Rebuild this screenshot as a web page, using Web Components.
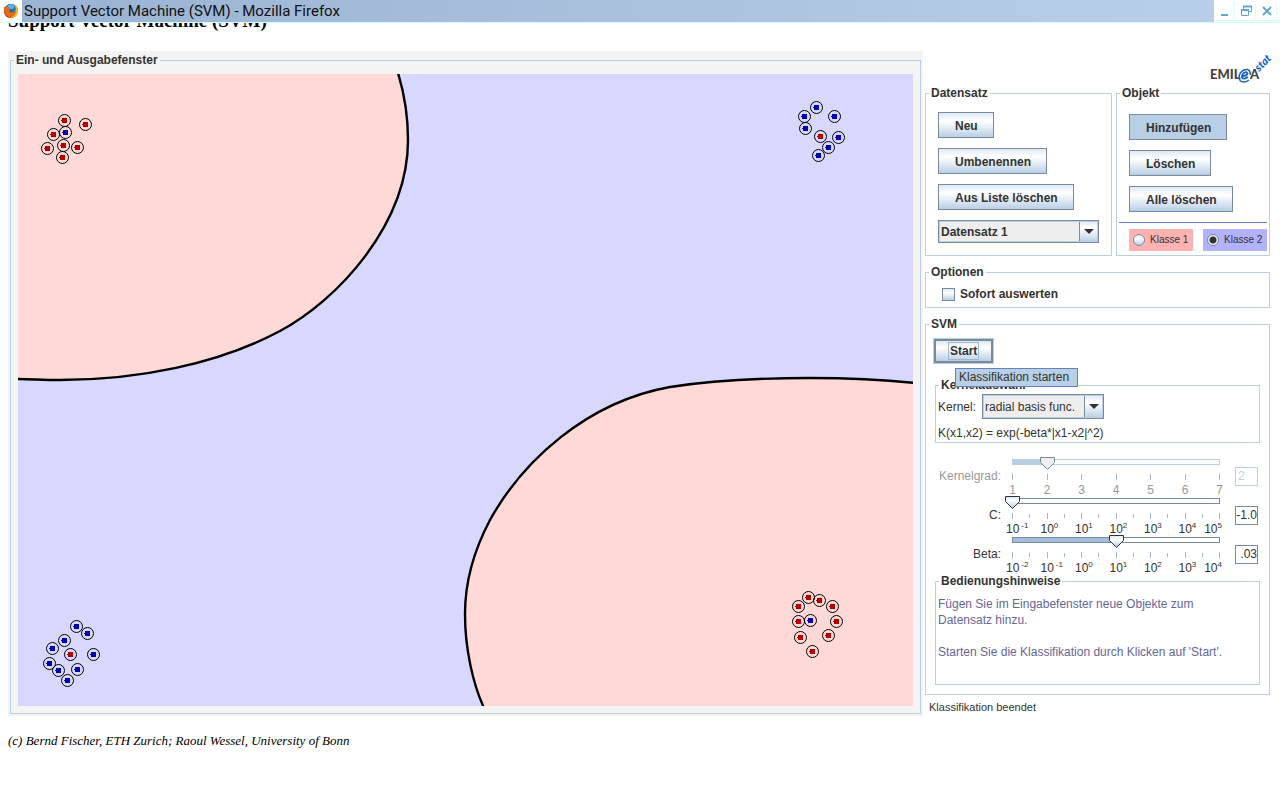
<!DOCTYPE html>
<html lang="de">
<head>
<meta charset="utf-8">
<title>Support Vector Machine (SVM)</title>
<style>
  body { margin: 0; background: #fff; color: #333; font: 12px/14px "Liberation Sans", Arial, sans-serif; }
</style>
</head>
<body>
<svm-app></svm-app>
<script>
function define(name, html, setup) {
  const template = document.createElement('template');
  template.innerHTML = html;
  customElements.define(name, class extends HTMLElement {
    connectedCallback() {
      if (this.shadowRoot) return;
      const root = this.attachShadow({ mode: 'open' });
      root.append(template.content.cloneNode(true));
      if (setup) setup(this, root);
    }
  });
}

define('window-bar', `
<style>
  :host { display: flex; height: 22px; background: #fff; border-bottom: 1px solid #d4fbfd; color: #111; }
  .icon { width: 22px; display: flex; align-items: center; justify-content: center; }
  .title { flex: 1; padding-left: 2px; font: 15px/23px Roboto, "Open Sans", sans-serif; background: linear-gradient(90deg, #9ab3d2, #b9cfe9); white-space: nowrap; overflow: hidden; }
  .buttons { display: flex; gap: 1px; padding: 1px 3px 1px 1px; }
  button { width: 20px; height: 20px; padding: 0; border: 0 solid #dffcfd; border-width: 0 1px 1px 0; background: #fff; display: flex; align-items: center; justify-content: center; }
</style>
<span class="icon"><svg width="16" height="16" viewBox="0 0 16 16" aria-hidden="true">
  <circle cx="8" cy="7.6" r="6.8" fill="#1d6fb5"/><path d="M4 3 Q8 0 12 2.5 L10 6 L6 6Z" fill="#5cb4e4"/>
  <path d="M1.2 3.5 Q2 4.5 3.2 4.2 Q5 3 6 4.2 L7.8 5.6 Q6 6.6 6 8 Q7.5 10.8 10.2 9 Q13.2 8 12.6 4.5 L11.8 2 Q15.6 5 14.9 9 Q13.5 14.8 8 15 Q1.6 14.6 1 8.5 Q.7 5.6 1.2 3.5Z" fill="#e66a12"/>
  <path d="M11.8 2 Q15.6 5 14.9 9 Q13.5 14.8 8 15 Q13.5 12 12.8 6Z" fill="#f8b822"/><path d="M1 7 Q2 13 8 15 Q1.6 14.6 1 8.5Z" fill="#b93418"/>
</svg></span>
<span class="title"><slot></slot></span>
<span class="buttons">
  <button aria-label="Minimieren"><svg width="12" height="12"><path d="M2 10h7" stroke="#62a9cf" stroke-width="2" fill="none"/></svg></button>
  <button aria-label="Wiederherstellen"><svg width="12" height="12" fill="none" stroke="#62a9cf"><path d="M3.5 4V1.5h8v5H9M1.500 4.500h7v6h-7z"/><path d="M3 1.500h9M1 5h8" stroke-width="2"/></svg></button>
  <button aria-label="Schließen"><svg width="12" height="12"><path d="M2 2l8 8M10 2l-8 8" stroke="#62a9cf" stroke-width="2" fill="none"/></svg></button>
</span>`);

define('titled-panel', `
<style>
  :host { display: block; }
  fieldset { margin: 0; min-width: 0; border: 1px solid #b8cfe5; padding: var(--pad, 0); height: 100%; box-sizing: border-box; }
  legend { padding: 0 2px; font-weight: bold; line-height: 14px; height: 14px; white-space: nowrap; }
</style>
<fieldset><legend></legend><slot></slot></fieldset>`, (host, root) => {
  const l = root.querySelector('legend');
  l.textContent = host.getAttribute('caption');
  l.style.marginLeft = 'calc(3px - ' + (host.getAttribute('inset') || '0px') + ')';
});

define('push-button', `
<style>
  :host { display: block; }
  button { font: bold 12px/14px "Liberation Sans", Arial, sans-serif; color: #333; height: 26px; padding: 1px 15px 0 16px; border: 1px solid #7a8a99; background: linear-gradient(#dde8f3, #fff 30%, #fff 35%, #b8cfe5); white-space: nowrap; display: block; }
  :host([pressed]) button { background: #b8cfe5; }
  :host([focused]) button { border-width: 2px; padding: 0 12px; outline: 1px solid #b8cfe5; outline-offset: 0; height: 24px; }
  :host([focused]) span { display: inline-block; padding: 1px; border: 1px solid #a3b8cc; }
</style>
<button type="button"><span><slot></slot></span></button>`);

define('combo-box', `
<style>
  :host { display: block; }
  div { display: flex; align-items: center; gap: 6px; }
  select { appearance: none; margin: 0; box-sizing: border-box; width: var(--w); height: var(--h); padding: 0 20px 0 2px; border: 1px solid #7a8a99; border-radius: 0; box-shadow: inset 0 0 0 1px #b8cfe5; color: #333; font: inherit; font-weight: var(--weight, normal);
    background: url("data:image/svg+xml,%3Csvg xmlns='http://www.w3.org/2000/svg' width='10' height='5'%3E%3Cpath d='M0 0h10L5 5z' fill='%23333'/%3E%3C/svg%3E") no-repeat right 4px center, linear-gradient(#7a8a99, #7a8a99) no-repeat right 18px top / 1px 100%, linear-gradient(#dde8f3, #fff 30%, #fff 35%, #b8cfe5) no-repeat right top / 18px 100%, #eee; }
</style>
<div><label for="s"></label><select id="s"></select></div>`, (host, root) => {
  const label = root.querySelector('label'), select = root.querySelector('select');
  if (host.hasAttribute('label')) label.textContent = host.getAttribute('label');
  else { label.remove(); select.setAttribute('aria-label', host.getAttribute('name')); }
  select.add(new Option(host.getAttribute('value')));
});

define('check-option', `
<style>
  :host { display: flex; align-items: center; gap: 5px; font-weight: bold; }
  input { appearance: none; margin: 0; width: 13px; height: 13px; border: 1px solid #7a8a99; background: linear-gradient(#dde8f3, #fff 35%, #b8cfe5); }
</style>
<input type="checkbox" id="c"><label for="c"><slot></slot></label>`);

define('class-picker', `
<style>
  :host { display: flex; gap: 10px; font-size: 10px; }
  label { display: flex; align-items: center; box-sizing: border-box; height: 22px; flex: 1; padding-left: 4px; gap: 5px; white-space: nowrap; }
  .one { background: #ffb2b2; } .two { background: #b2b2ff; }
  input { appearance: none; flex: none; margin: 0; width: 12px; height: 12px; border: 1px solid #7a8a99; border-radius: 50%; background: linear-gradient(#dde8f3, #fff 35%, #b8cfe5); }
  input:checked { background: radial-gradient(circle, #333 3px, #e8f0f8 4px); }
</style>
<label class="one"><input type="radio" name="k">Klasse 1</label>
<label class="two"><input type="radio" name="k" checked>Klasse 2</label>`);

define('slider-row', `
<style>
  :host { display: grid; grid-template-columns: 66px 220px 27px; column-gap: 5px; height: 39px; align-items: center; }
  :host([disabled]) { color: #999; --line: #b8cfe5; --edge: #b8cfe5; --fill: #b8cfe5; }
  .name { text-align: right; white-space: nowrap; margin-bottom: 2px; }
  .scale { align-self: start; }
  .groove { display: grid; height: 13px; }
  .groove > * { grid-area: 1 / 1; }
  .track { box-sizing: border-box; height: 6px; margin: 2px 6px 0; border: 1px solid var(--line, #7a8a99);
    background: linear-gradient(90deg, var(--fill, #a3bde0) var(--at), #fff var(--at)); }
  input[type=range] { appearance: none; height: 13px; margin: 0 -1px; background: none; min-width: 0; }
  input::-webkit-slider-runnable-track { height: 13px; }
  input::-webkit-slider-thumb { appearance: none; width: 15px; height: 13px; border: 0;
    background: url("data:image/svg+xml,%3Csvg xmlns='http://www.w3.org/2000/svg' width='15' height='13'%3E%3ClinearGradient id='g' x2='0' y2='1'%3E%3Cstop stop-color='%23dde8f3'/%3E%3Cstop offset='.35' stop-color='white'/%3E%3Cstop offset='1' stop-color='%23a8c4e0'/%3E%3C/linearGradient%3E%3Cpath d='M.5 .5h14v5L7.5 12.500.5 5.500z' fill='url(%23g)' stroke='%23333'/%3E%3C/svg%3E") no-repeat; }
  input:disabled::-webkit-slider-thumb { background-image: url("data:image/svg+xml,%3Csvg xmlns='http://www.w3.org/2000/svg' width='15' height='13'%3E%3Cpath d='M.5 .5h14v5L7.5 12.500.5 5.500z' fill='%23eee' stroke='%237a8a99'/%3E%3C/svg%3E"); }
  .ticks { display: flex; justify-content: space-between; height: 6px; margin: 4px 6px 3px; }
  .ticks i { width: 1px; height: 6px; background: #a3b8cc; }
  .ticks i.minor { height: 4px; margin-top: 1px; }
  .nums { display: flex; justify-content: space-between; }
  .nums span { width: 13px; text-align: center; white-space: nowrap; line-height: 14px; height: 14px; }
  .nums.pow span { text-align: left; display: flex; }
  .nums.pow span:last-child { justify-content: flex-end; box-sizing: border-box; padding-right: 4px; }
  sup { font-size: 8px; line-height: 8px; }
  sup.neg { padding-left: 2px; }
  input[type=text] { box-sizing: border-box; justify-self: end; width: 23px; height: 19px; margin-bottom: 2px; padding: 0; border: 1px solid var(--edge, #7a8a99); background: #fff; color: inherit; font: inherit; text-align: right; }
  :host([disabled]) input[type=text] { text-align: left; padding-left: 2px; color: #b8cfe5; }
</style>
<label class="name" for="r"></label>
<div class="scale"><div class="groove"><div class="track"></div><input type="range" id="r"></div><div class="ticks"></div><div class="nums"></div></div>
<input type="text">`, (host, root) => {
  const get = n => host.getAttribute(n);
  const powers = host.hasAttribute('powers'), from = +get('from');
  root.querySelector('.name').textContent = get('label');
  const r = root.querySelector('#r');
  r.min = from; r.max = from + 6; r.value = get('at');
  root.querySelector('.track').style.setProperty('--at', (get('at') - from) / 6 * 100 + '%');
  const t = root.querySelector('input[type=text]');
  t.value = get('value'); t.setAttribute('aria-label', get('label') + ' Wert');
  if (host.hasAttribute('disabled')) { r.disabled = true; t.disabled = true; }
  const ticks = root.querySelector('.ticks'), nums = root.querySelector('.nums');
  if (powers) nums.classList.add('pow');
  for (let k = 0; k < 7; k++) {
    ticks.insertAdjacentHTML('beforeend', (k && powers ? '<i class="minor"></i>' : '') + '<i></i>');
    const n = from + k;
    nums.insertAdjacentHTML('beforeend', powers ? `<span>10<sup class="${n < 0 ? 'neg' : ''}">${n}</sup></span>` : `<span>${n}</span>`);
  }
});

define('svm-plot', `
<style>
  :host { display: block; }
  svg { display: block; width: 100%; height: auto; background: #d8d8ff; }
</style>
<svg viewBox="0 0 895 632" role="img" aria-label="Klassifikationsergebnis">
  <g fill="#ffd8d8" stroke="#000" stroke-width="2.4">
    <path d="M380 -1C388 25 390 45 390 66C390 150 320 226 262 257C200 290 120 306 42 306C25 306 12 305 -2 305V-3H380Z"/>
    <path d="M897 309C860 305 830 304 792 304C730 304 690 307 652 313C568 328 504 388 472 446C455 478 447 510 447 540C447 575 455 610 466 634H898Z"/>
  </g>
</svg>`, (host, root) => {
  const red = '#b20000', blue = '#0000b2';
  const points = [
    [red, [[64,120],[85,124],[53,134],[47,148],[63,145],[77,147],[62,157],[820,136],[70,654],
           [808,597],[819,600],[798,606],[832,606],[798,621],[836,621],[800,637],[828,635],[812,651]]],
    [blue, [[65,132],[816,107],[804,116],[834,116],[805,128],[838,137],[828,147],[818,155],
            [76,626],[87,633],[64,640],[52,648],[93,654],[49,663],[58,670],[77,669],[67,680],[810,620]]]];
  let marks = '';
  for (const [color, list] of points) for (const [px, py] of list) {
    const x = px - 18, y = py - 74;
    marks += `<circle cx="${x + .5}" cy="${y + .5}" r="6" fill="none" stroke="#000"/><path d="M${x - 2} ${y - 2}h5v5h-5zM${x - 3} ${y}h1v1h-1z" fill="${color}"/>`;
  }
  root.querySelector('svg').insertAdjacentHTML('beforeend', marks);
});

define('emilea-logo', `
<style>:host { display: block; } svg { display: block; }</style>
<svg width="66" height="35" viewBox="0 0 66 35" role="img" aria-label="EMILeA-stat" font-family="Lato, sans-serif" font-weight="900">
  <text x="2" y="28" font-size="13" fill="#444">EMIL</text>
  <text x="42" y="28" font-size="13" fill="#444">A</text>
  <path d="M34 25Q39 25 39.500 22.500Q39 20.500 36.500 21.500Q33.500 23.500 34 26.500Q35.500 29 40 26" fill="none" stroke="#1463c4" stroke-width="1.8"/>
  <path d="M41 29Q36 32.500 32.500 30Q30 27 32 22.500Q35 18 39.500 18.500Q43 20 42 24" fill="none" stroke="#1463c4" stroke-width="1.5"/>
  <text transform="translate(51 21) rotate(-45)" font-size="11" font-weight="900" font-style="italic" fill="#1463c4">stat</text>
</svg>`);

define('tool-tip', `
<style>:host { display: block; padding: 1px 8px 1px 3px; border: 1px solid #6382bf; background: #b8cfe5; white-space: nowrap; line-height: 15px; }</style>
<slot></slot>`);

define('svm-app', `
<style>
  :host { display: block; }
  window-bar { position: fixed; top: 0; left: 0; right: 0; z-index: 5; }
  main { padding: 10px 8px 0; }
  h1 { margin: 0 0 19px; font: bold 19px/22px "Liberation Serif", "Times New Roman", serif; color: #000; }
  .applet { display: flex; gap: 2px; align-items: flex-start; padding-right: 2px; }
  .io { flex: 1; min-width: 0; background: #f4f4f4; padding: 2px; }
  .io titled-panel { --pad: 7px; }
  .side { width: 345px; flex: none; display: flex; flex-direction: column; }
  emilea-logo { align-self: flex-end; margin-right: -4px; }
  .top { display: grid; grid-template-columns: 187px 1fr; gap: 4px; margin-bottom: 9px; }
  .stack { display: flex; flex-direction: column; align-items: flex-start; gap: 10px; padding: 12px; }
  .objects { padding: 14px 12px 10px; }
  hr { margin: 0 2px 6px; border: 0; border-top: 1px solid #6382bf; }
  class-picker { padding: 0 2px 4px 12px; }
  check-option { padding: 8px 16px 6px; }
  .svm { margin-top: 9px; --pad: 7px 7px 9px; }
  .start { position: relative; width: fit-content; padding: 1px; margin-bottom: 14px; }
  tool-tip { position: absolute; left: 22px; top: 30px; z-index: 2; }
  .kernel, .hints { margin: 0 2px; --pad: 2px 2px 1px; }
  .kernel p { margin: 6px 0 0; line-height: 16px; }
  .sliders { margin: 14px 2px 0; }
  .hints { --pad: 8px 2px 24px; }
  .hints p { margin: 0 0 16px; line-height: 16px; color: #669; }
  .hints p:last-child { margin: 0; }
  output { display: block; margin: 5px 4px 0; font-size: 11px; }
  address { margin: 17px 0 0; font: italic 13px/16px "Liberation Serif", "Times New Roman", serif; color: #000; }
</style>
<window-bar>Support Vector Machine (SVM) - Mozilla Firefox</window-bar>
<main>
  <h1>Support Vector Machine (SVM)</h1>
  <div class="applet">
    <section class="io"><titled-panel caption="Ein- und Ausgabefenster" inset="7px"><svm-plot></svm-plot></titled-panel></section>
    <section class="side">
      <emilea-logo></emilea-logo>
      <div class="top">
        <titled-panel caption="Datensatz"><div class="stack">
          <push-button>Neu</push-button>
          <push-button>Umbenennen</push-button>
          <push-button>Aus Liste löschen</push-button>
          <combo-box name="Datensatz" value="Datensatz 1" style="--w:161px;--h:23px;--weight:bold"></combo-box>
        </div></titled-panel>
        <titled-panel caption="Objekt"><div class="stack objects">
          <push-button pressed>Hinzufügen</push-button>
          <push-button>Löschen</push-button>
          <push-button>Alle löschen</push-button>
        </div><hr><class-picker></class-picker></titled-panel>
      </div>
      <titled-panel caption="Optionen"><check-option>Sofort auswerten</check-option></titled-panel>
      <titled-panel class="svm" caption="SVM" inset="7px">
        <div class="start"><push-button focused>Start</push-button><tool-tip role="tooltip">Klassifikation starten</tool-tip></div>
        <titled-panel class="kernel" caption="Kernelauswahl" inset="2px">
          <combo-box label="Kernel:" value="radial basis func." style="--w:122px;--h:25px"></combo-box>
          <p>K(x1,x2) = exp(-beta*|x1-x2|^2)</p>
        </titled-panel>
        <div class="sliders">
          <slider-row label="Kernelgrad:" from="1" at="2" value="2" disabled></slider-row>
          <slider-row label="C:" from="-1" at="-1" value="-1.0" powers></slider-row>
          <slider-row label="Beta:" from="-2" at="1" value=".03" powers></slider-row>
        </div>
        <titled-panel class="hints" caption="Bedienungshinweise" inset="2px">
          <p>Fügen Sie im Eingabefenster neue Objekte zum<br>Datensatz hinzu.</p>
          <p>Starten Sie die Klassifikation durch Klicken auf 'Start'.</p>
        </titled-panel>
      </titled-panel>
      <output>Klassifikation beendet</output>
    </section>
  </div>
  <address>(c) Bernd Fischer, ETH Zurich; Raoul Wessel, University of Bonn</address>
</main>`);
</script>
</body>
</html>
